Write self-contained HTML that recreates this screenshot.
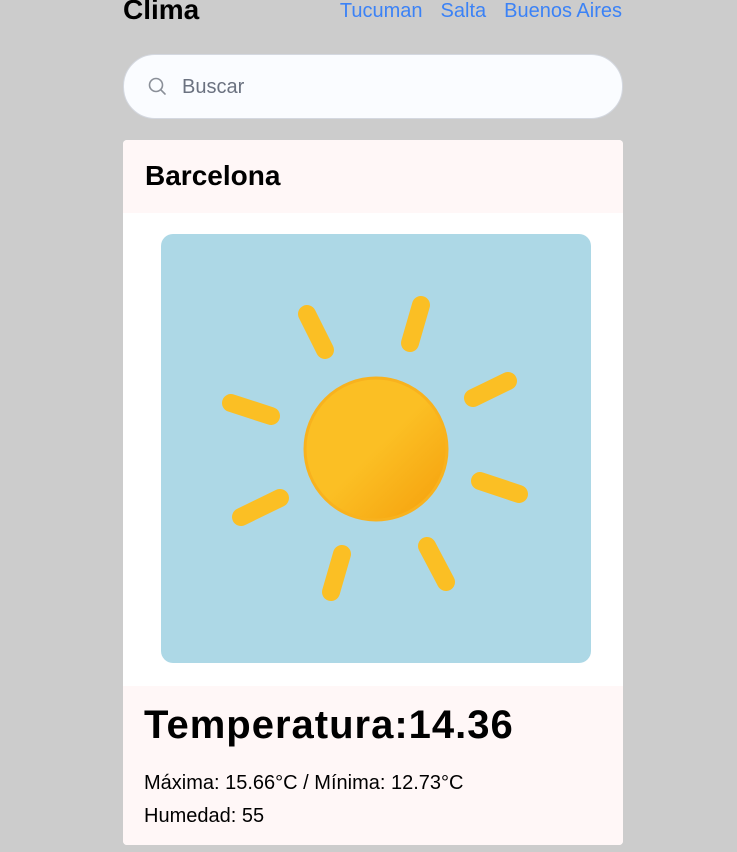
<!DOCTYPE html>
<html><head><meta charset="utf-8"><style>
body{margin:0;background:#cccccc;font-family:"Liberation Sans",sans-serif;width:737px;height:852px;overflow:hidden;position:relative}
.t{position:absolute;left:123px;top:-6px;font-size:28px;font-weight:bold;color:#000}
.nav{position:absolute;top:0;right:115px;font-size:20px;color:#3b82f6}
.nav span{margin-left:18px}
.search{position:absolute;left:123px;top:54px;width:498px;height:63px;border:1px solid #d4d8e0;border-radius:32px;background:#fafcff}
.search .p{position:absolute;left:58px;top:21px;font-size:20px;color:#6b7280}
.card{position:absolute;left:123px;top:140px;width:500px;height:705px;background:#fff;border-radius:4px;overflow:hidden}
.hd{height:73px;background:#fff7f7}
.hd div{position:absolute;left:22px;top:20px;font-size:28px;font-weight:bold}
.img{position:absolute;left:38px;top:94px;width:430px;height:429px;background:#add8e6;border-radius:12px}
.ft{position:absolute;left:0;top:546px;width:500px;height:159px;background:#fff7f7}
.ft h1{margin:0;position:absolute;left:21px;top:17px;font-size:40px;letter-spacing:1px}
.ft p{margin:0;position:absolute;left:21px;font-size:20px}
</style></head><body>
<div class="t">Clima</div>
<div class="nav"><span>Tucuman</span><span>Salta</span><span>Buenos Aires</span></div>
<div class="search"><svg style="position:absolute;left:24px;top:22px" width="20" height="20" viewBox="0 0 20 20"><circle cx="8" cy="8" r="6.5" fill="none" stroke="#8a8f98" stroke-width="1.6"/><line x1="12.8" y1="12.8" x2="17" y2="17" stroke="#8a8f98" stroke-width="1.6" stroke-linecap="round"/></svg><div class="p">Buscar</div></div>
<div class="card">
<div class="hd"><div>Barcelona</div></div>
<div class="img"></div>
<div class="ft"><h1>Temperatura:14.36</h1><p style="top:86px">Máxima: 15.66°C / Mínima: 12.73°C</p><p style="top:119px">Humedad: 55</p></div>
</div>
<svg style="position:absolute;left:0;top:0" width="737" height="852">
<defs><linearGradient id="g" x1="0" y1="0" x2="1" y2="1"><stop offset="0.5" stop-color="#fbbf24"/><stop offset="1" stop-color="#f59e0b"/></linearGradient></defs>
<g stroke="#fbbf24" stroke-width="18" stroke-linecap="round">
<line x1="307" y1="314" x2="325" y2="350"/>
<line x1="421" y1="305" x2="410" y2="343"/>
<line x1="508" y1="381" x2="473" y2="398"/>
<line x1="231" y1="403" x2="271" y2="416"/>
<line x1="480" y1="481" x2="519" y2="494"/>
<line x1="241" y1="517" x2="280" y2="498"/>
<line x1="342" y1="554" x2="331" y2="592"/>
<line x1="427" y1="546" x2="446" y2="582"/>
</g>
<circle cx="376" cy="449" r="71" fill="url(#g)" stroke="#f8b21e" stroke-width="3"/>
</svg>
</body></html>
